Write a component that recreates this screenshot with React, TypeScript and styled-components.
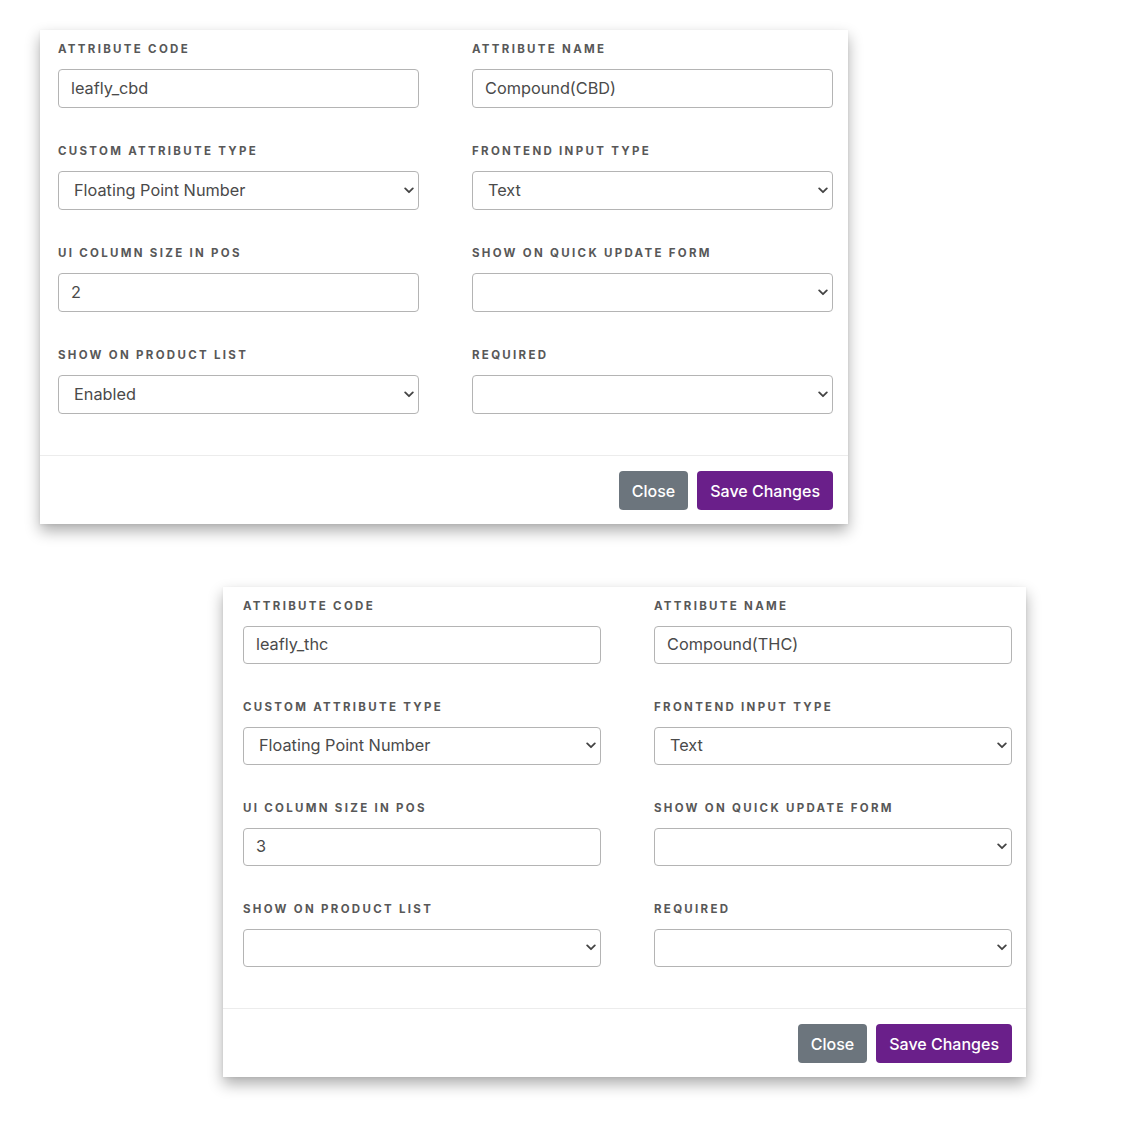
import styled, { createGlobalStyle } from 'styled-components';

const GlobalStyle = createGlobalStyle`
	html, body {
		margin: 0;
		padding: 0;
		background: #ffffff;
	}
	body {
		font-family: 'Inter', 'Liberation Sans', sans-serif;
		color: #444;
	}
	* {
		box-sizing: border-box;
	}
`;

type Field =
	| { label: string; kind: 'input'; value: string }
	| { label: string; kind: 'select'; value: string };

interface CardData {
	shift: number;
	width: number;
	padL: number;
	padR: number;
	fieldH: number;
	fields: Field[];
}

const makeFields = (code: string, name: string, size: string, productList: string): Field[] => [
	{ label: 'Attribute Code', kind: 'input', value: code },
	{ label: 'Attribute Name', kind: 'input', value: name },
	{ label: 'Custom Attribute Type', kind: 'select', value: 'Floating Point Number' },
	{ label: 'Frontend Input Type', kind: 'select', value: 'Text' },
	{ label: 'UI Column Size in POS', kind: 'input', value: size },
	{ label: 'Show on Quick Update Form', kind: 'select', value: '' },
	{ label: 'Show on Product List', kind: 'select', value: productList },
	{ label: 'Required', kind: 'select', value: '' },
];

const cards: CardData[] = [
	{ shift: 40, width: 808, padL: 18, padR: 15, fieldH: 39, fields: makeFields('leafly_cbd', 'Compound(CBD)', '2', 'Enabled') },
	{ shift: 223, width: 803, padL: 20, padR: 14, fieldH: 38, fields: makeFields('leafly_thc', 'Compound(THC)', '3', '') },
];

const Chevron = ({ h }: { h: number }) => (
	<ChevronIcon $h={h} width='10' height='7' viewBox='0 0 10 7'>
		<path d='M1.2 1.4 L5 5.2 L8.8 1.4' fill='none' stroke='#444' strokeWidth='1.8' strokeLinecap='round' strokeLinejoin='round' />
	</ChevronIcon>
);

const FormField = ({ field, h }: { field: Field; h: number }) => (
	<Group>
		<Label>{field.label}</Label>
		{field.kind === 'input' ? (
			<TextInput $h={h} defaultValue={field.value} />
		) : (
			<SelectWrap>
				<Select $h={h} defaultValue={field.value}>
					<option value=''></option>
					{field.value && <option value={field.value}>{field.value}</option>}
				</Select>
				<Chevron h={h} />
			</SelectWrap>
		)}
	</Group>
);

const App = () => {
	return (
		<>
			<GlobalStyle />
			<Page>
				{cards.map((card, i) => (
					<Card key={i} $shift={card.shift} $width={card.width}>
						<Body $padL={card.padL} $padR={card.padR}>
							{card.fields.map((f) => (
								<FormField key={f.label} field={f} h={card.fieldH} />
							))}
						</Body>
						<Footer $padR={card.padR}>
							<Button $variant='secondary'>Close</Button>
							<Button $variant='primary'>Save Changes</Button>
						</Footer>
					</Card>
				))}
			</Page>
		</>
	);
};

export default App;

const Page = styled.div`
	display: flex;
	flex-direction: column;
	align-items: flex-start;
	gap: 63px;
	padding: 30px 0 52px;
	width: 1136px;
	min-height: 1130px;
`;

const Card = styled.div<{ $shift: number; $width: number }>`
	margin-left: ${(p) => p.$shift}px;
	width: ${(p) => p.$width}px;
	background: #ffffff;
	box-shadow: 0 7px 14px rgba(0, 0, 0, 0.32), 0 1px 3px rgba(0, 0, 0, 0.06);
`;

const Body = styled.div<{ $padL: number; $padR: number }>`
	display: grid;
	grid-template-columns: 1fr 1fr;
	column-gap: 53px;
	row-gap: 36px;
	padding: 12px ${(p) => p.$padR}px 41px ${(p) => p.$padL}px;
	border-bottom: 1px solid #ececec;
`;

const Group = styled.div`
	display: flex;
	flex-direction: column;
	gap: 13px;
`;

const Label = styled.label`
	font-family: 'Inter', 'Liberation Sans', sans-serif;
	font-size: 11.5px;
	line-height: 14px;
	font-weight: 700;
	letter-spacing: 2.3px;
	text-transform: uppercase;
	color: #585858;
`;

const fieldBase = `
	width: 100%;
	border: 1px solid #b4b4b4;
	border-radius: 4px;
	background: #ffffff;
	font-family: 'Inter', 'Liberation Sans', sans-serif;
	font-size: 16.3px;
	color: #4a4a4a;
	outline: none;
	margin: 0;
`;

const TextInput = styled.input<{ $h: number }>`
	${fieldBase}
	height: ${(p) => p.$h}px;
	padding: 0 12px 2px;
`;

const SelectWrap = styled.div`
	position: relative;
`;

const Select = styled.select<{ $h: number }>`
	${fieldBase}
	height: ${(p) => p.$h}px;
	appearance: none;
	-webkit-appearance: none;
	padding: 0 30px 2px 15px;
`;

const ChevronIcon = styled.svg<{ $h: number }>`
	position: absolute;
	right: 5px;
	top: ${(p) => Math.round(p.$h / 2 - 4)}px;
	pointer-events: none;
`;

const Footer = styled.div<{ $padR: number }>`
	display: flex;
	justify-content: flex-end;
	gap: 9px;
	padding: 15px ${(p) => p.$padR}px 14px 0;
`;

const Button = styled.button<{ $variant: 'primary' | 'secondary' }>`
	height: 39px;
	padding: 0 13px;
	border: none;
	border-radius: 4px;
	font-family: 'Inter', 'Liberation Sans', sans-serif;
	font-size: 16px;
	font-weight: 500;
	color: #ffffff;
	background: ${(p) => (p.$variant === 'primary' ? '#6a1f8a' : '#6c757d')};
	cursor: pointer;
`;
